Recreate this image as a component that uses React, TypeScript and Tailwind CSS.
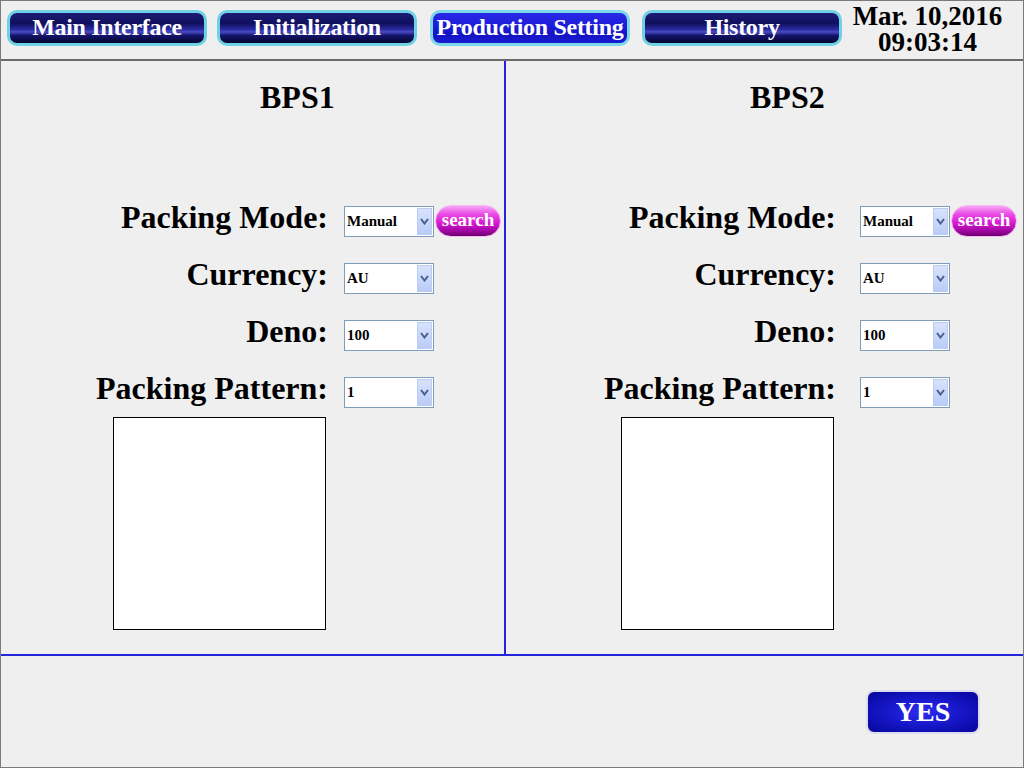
import React from "react";

const serif = "font-['Liberation_Serif','Times_New_Roman',serif]";

function NavButton({ label, active }: { label: string; active?: boolean }) {
  const base =
    "w-[200px] h-[36px] rounded-[10px] border-[3px] flex items-center justify-center text-white font-bold text-[24px] leading-none tracking-[-0.3px] pb-[3px]";
  const look = active
    ? "border-[#7ad8ea] bg-[linear-gradient(to_bottom,#2a2ae6_0%,#1c1cd8_45%,#1414c4_70%,#1a1ad2_100%)]"
    : "border-[#6fd2e4] bg-[linear-gradient(to_bottom,#1c1c74_0%,#10105e_35%,#2a2aa0_55%,#4a4ac4_63%,#14146a_75%,#05052e_100%)]";
  return <div className={`${base} ${look}`}>{label}</div>;
}

function Chevron() {
  return (
    <svg width="9" height="7" viewBox="0 0 9 7">
      <path d="M1 1 L4.5 5.5 L8 1" fill="none" stroke="#4a5f8c" strokeWidth="2" />
    </svg>
  );
}

function Select({ value }: { value: string }) {
  return (
    <div className="w-[90px] h-[31px] border border-[#7f9db9] bg-white flex items-center shrink-0">
      <span className="pl-[2px] text-[15px] font-bold text-black leading-none">{value}</span>
      <div className="ml-auto mr-[1px] w-[15px] h-[27px] border border-[#bccbf0] bg-[linear-gradient(to_bottom,#d8e2fc,#b9ccf8)] flex items-center justify-center">
        <Chevron />
      </div>
    </div>
  );
}

function SearchButton() {
  return (
    <div className="w-[66px] h-[32px] ml-[1px] -mt-[1px] rounded-full border border-[#f4b8f4] bg-[linear-gradient(to_bottom,#f7a6f4_0%,#ea4ae6_28%,#d81cd4_55%,#a808a8_80%,#6c006c_100%)] flex items-center justify-center pb-[4px] text-white font-bold text-[19px] leading-none">
      search
    </div>
  );
}

function Row({
  label,
  value,
  labelWidth,
  gap,
  search,
}: {
  label: string;
  value: string;
  labelWidth: string;
  gap: string;
  search?: boolean;
}) {
  return (
    <div className="flex items-start h-[31px]">
      <div className={`${labelWidth} ${gap} -mt-[4px] text-right text-[32px] leading-[31px] font-bold text-black whitespace-nowrap`}>
        {label}
      </div>
      <Select value={value} />
      {search && <SearchButton />}
    </div>
  );
}

function Panel({ side }: { side: "left" | "right" }) {
  const left = side === "left";
  const labelWidth = left ? "w-[327px]" : "w-[330px]";
  const gap = left ? "mr-[16px]" : "mr-[24px]";
  return (
    <div className="flex flex-col">
      <div className={`${left ? "pl-[259px]" : "pl-[244px]"} pt-[18px] text-[32px] leading-[36px] font-bold text-black`}>
        {left ? "BPS1" : "BPS2"}
      </div>
      <div className="mt-[91px] flex flex-col gap-[26px]">
        <Row label="Packing Mode:" value="Manual" labelWidth={labelWidth} gap={gap} search />
        <Row label="Currency:" value="AU" labelWidth={labelWidth} gap={gap} />
        <Row label="Deno:" value="100" labelWidth={labelWidth} gap={gap} />
        <Row label="Packing Pattern:" value="1" labelWidth={labelWidth} gap={gap} />
      </div>
      <div className={`${left ? "ml-[112px]" : "ml-[115px]"} mt-[9px] w-[213px] h-[213px] bg-white border border-black`} />
    </div>
  );
}

export default function App() {
  return (
    <div className={`${serif} w-[1024px] h-[768px] bg-[#efefef] border border-[#7a7a7a] flex flex-col overflow-hidden`}>
      {/* top navigation */}
      <div className="h-[60px] shrink-0 border-b-2 border-[#6a6a6a] flex items-start">
        <div className="flex pt-[9px]">
          <div className="ml-[6px]">
            <NavButton label="Main Interface" />
          </div>
          <div className="ml-[10px]">
            <NavButton label="Initialization" />
          </div>
          <div className="ml-[13px]">
            <NavButton label="Production Setting" active />
          </div>
          <div className="ml-[12px]">
            <NavButton label="History" />
          </div>
        </div>
        <div className="flex-1 pr-[10px] pt-[2px] flex flex-col items-center text-black font-bold text-[27px] leading-[26px]">
          <span className="whitespace-nowrap">Mar. 10,2016</span>
          <span>09:03:14</span>
        </div>
      </div>

      {/* two production panels */}
      <div className="h-[595px] shrink-0 flex border-b-2 border-[#2424d8]">
        <div className="w-[505px] border-r-2 border-[#2424d8] shrink-0">
          <Panel side="left" />
        </div>
        <div className="flex-1">
          <Panel side="right" />
        </div>
      </div>

      {/* confirm bar */}
      <div className="flex-1 flex justify-end items-start pt-[34px] pr-[43px]">
        <div className="w-[114px] h-[44px] rounded-[8px] border-2 border-[#dcdcee] bg-[radial-gradient(ellipse_at_center,#2e2ef2_0%,#1818cc_45%,#06069a_100%)] flex items-center justify-center text-white font-bold text-[28px] leading-none">
          YES
        </div>
      </div>
    </div>
  );
}
